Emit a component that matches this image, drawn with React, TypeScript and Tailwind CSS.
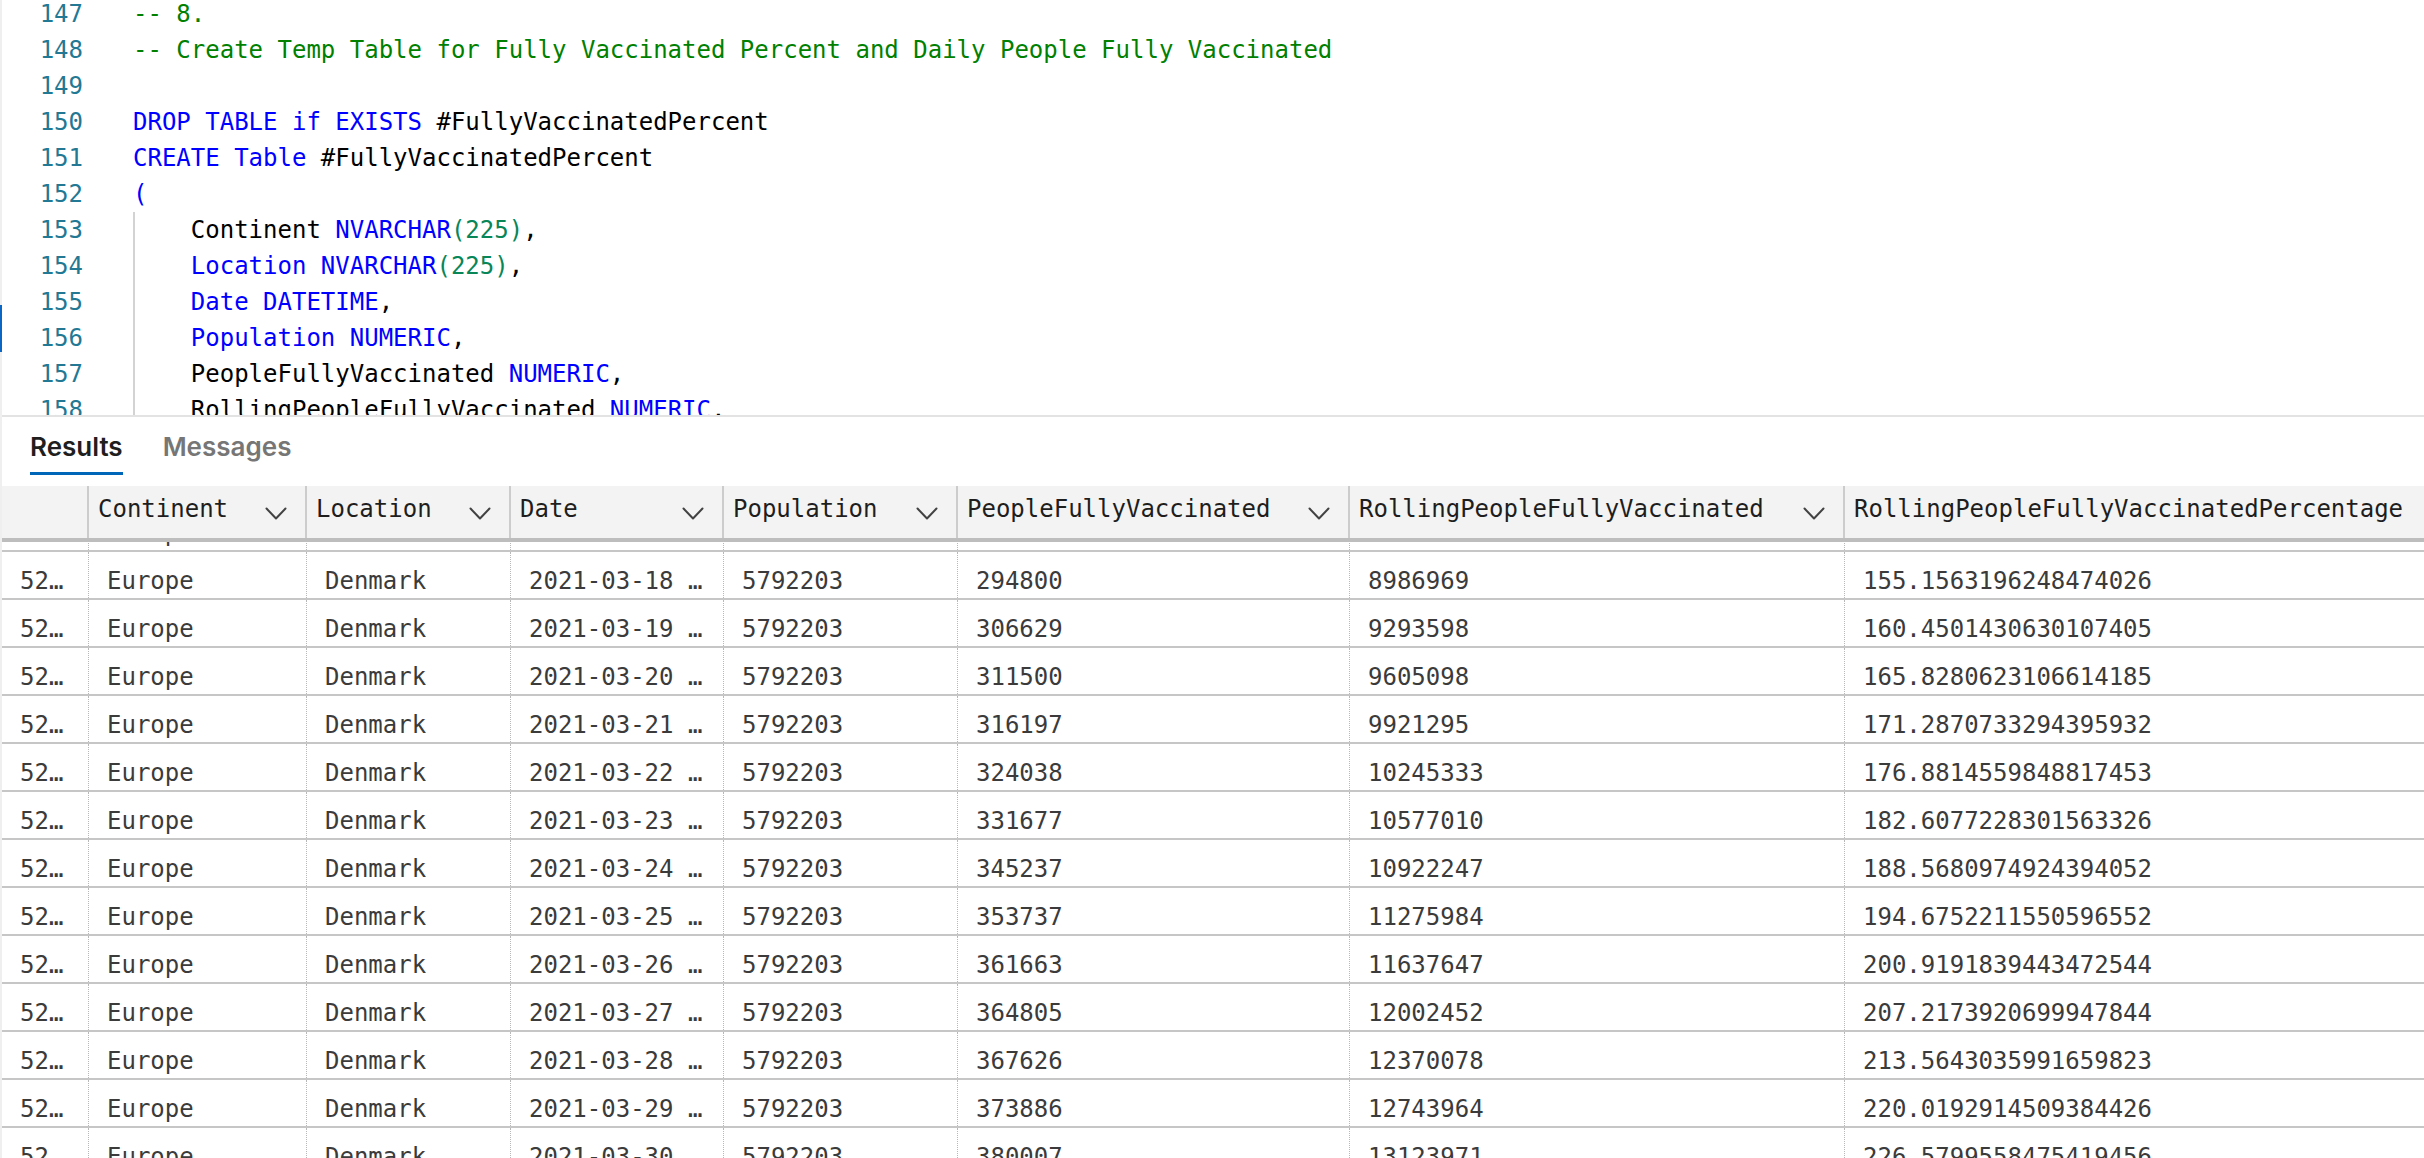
import React from "react";

type Tok = { t: string; c: "g" | "b" | "n" | "k" };

const tokCls: Record<string, string> = {
  g: "text-[#008000]",
  b: "text-[#0000ff]",
  n: "text-[#098658]",
  k: "text-[#000000]",
};

const codeLines: { n: number; indent: boolean; toks: Tok[] }[] = [
  { n: 147, indent: false, toks: [{ t: "-- 8.", c: "g" }] },
  {
    n: 148,
    indent: false,
    toks: [
      {
        t: "-- Create Temp Table for Fully Vaccinated Percent and Daily People Fully Vaccinated",
        c: "g",
      },
    ],
  },
  { n: 149, indent: false, toks: [] },
  {
    n: 150,
    indent: false,
    toks: [
      { t: "DROP TABLE if EXISTS", c: "b" },
      { t: " #FullyVaccinatedPercent", c: "k" },
    ],
  },
  {
    n: 151,
    indent: false,
    toks: [
      { t: "CREATE Table", c: "b" },
      { t: " #FullyVaccinatedPercent", c: "k" },
    ],
  },
  { n: 152, indent: false, toks: [{ t: "(", c: "b" }] },
  {
    n: 153,
    indent: true,
    toks: [
      { t: "Continent ", c: "k" },
      { t: "NVARCHAR", c: "b" },
      { t: "(225)", c: "n" },
      { t: ",", c: "k" },
    ],
  },
  {
    n: 154,
    indent: true,
    toks: [
      { t: "Location NVARCHAR", c: "b" },
      { t: "(225)", c: "n" },
      { t: ",", c: "k" },
    ],
  },
  {
    n: 155,
    indent: true,
    toks: [
      { t: "Date DATETIME", c: "b" },
      { t: ",", c: "k" },
    ],
  },
  {
    n: 156,
    indent: true,
    toks: [
      { t: "Population NUMERIC", c: "b" },
      { t: ",", c: "k" },
    ],
  },
  {
    n: 157,
    indent: true,
    toks: [
      { t: "PeopleFullyVaccinated ", c: "k" },
      { t: "NUMERIC", c: "b" },
      { t: ",", c: "k" },
    ],
  },
  {
    n: 158,
    indent: true,
    toks: [
      { t: "RollingPeopleFullyVaccinated ", c: "k" },
      { t: "NUMERIC", c: "b" },
      { t: ",", c: "k" },
    ],
  },
];

const headers: { name: string; w: string; chevron: boolean }[] = [
  { name: "", w: "w-[87px]", chevron: false },
  { name: "Continent", w: "w-[218px]", chevron: true },
  { name: "Location", w: "w-[204px]", chevron: true },
  { name: "Date", w: "w-[213px]", chevron: true },
  { name: "Population", w: "w-[234px]", chevron: true },
  { name: "PeopleFullyVaccinated", w: "w-[392px]", chevron: true },
  { name: "RollingPeopleFullyVaccinated", w: "w-[495px]", chevron: true },
  { name: "RollingPeopleFullyVaccinatedPercentage", w: "w-[720px]", chevron: true },
];

const rows: string[][] = [
  ["52…", "Europe", "Denmark", "2021-03-17 …", "5792203", "287000", "8692169", "150.0667155121030981"],
  ["52…", "Europe", "Denmark", "2021-03-18 …", "5792203", "294800", "8986969", "155.1563196248474026"],
  ["52…", "Europe", "Denmark", "2021-03-19 …", "5792203", "306629", "9293598", "160.4501430630107405"],
  ["52…", "Europe", "Denmark", "2021-03-20 …", "5792203", "311500", "9605098", "165.8280623106614185"],
  ["52…", "Europe", "Denmark", "2021-03-21 …", "5792203", "316197", "9921295", "171.2870733294395932"],
  ["52…", "Europe", "Denmark", "2021-03-22 …", "5792203", "324038", "10245333", "176.8814559848817453"],
  ["52…", "Europe", "Denmark", "2021-03-23 …", "5792203", "331677", "10577010", "182.6077228301563326"],
  ["52…", "Europe", "Denmark", "2021-03-24 …", "5792203", "345237", "10922247", "188.5680974924394052"],
  ["52…", "Europe", "Denmark", "2021-03-25 …", "5792203", "353737", "11275984", "194.6752211550596552"],
  ["52…", "Europe", "Denmark", "2021-03-26 …", "5792203", "361663", "11637647", "200.9191839443472544"],
  ["52…", "Europe", "Denmark", "2021-03-27 …", "5792203", "364805", "12002452", "207.2173920699947844"],
  ["52…", "Europe", "Denmark", "2021-03-28 …", "5792203", "367626", "12370078", "213.5643035991659823"],
  ["52…", "Europe", "Denmark", "2021-03-29 …", "5792203", "373886", "12743964", "220.0192914509384426"],
  ["52…", "Europe", "Denmark", "2021-03-30 …", "5792203", "380007", "13123971", "226.5799558475419456"],
];

function Chevron() {
  return (
    <svg width="22" height="13" viewBox="0 0 22 13" className="flex-none mt-[8px]">
      <polyline
        points="1.5,1.5 11,11.5 20.5,1.5"
        fill="none"
        stroke="#424242"
        strokeWidth="2"
        strokeLinecap="round"
        strokeLinejoin="round"
      />
    </svg>
  );
}

export default function App() {
  return (
    <div className="w-[2424px] h-[1158px] overflow-hidden bg-white flex flex-row font-['DejaVu_Sans_Mono',monospace]">
      {/* left window edge with change indicator */}
      <div className="w-[2px] flex-none bg-[#efefef] flex flex-col">
        <div className="mt-[305px] h-[47px] bg-[#0a66c2]" />
      </div>

      <div className="flex-1 min-w-0 flex flex-col overflow-hidden">
        {/* Editor */}
        <div className="h-[417px] flex-none overflow-hidden border-b-2 border-[#e3e3e3]">
          <div className="-mt-[4px] flex flex-col">
            {codeLines.map((l) => (
              <div key={l.n} className="h-[36px] flex flex-row items-center text-[24px] leading-[36px] whitespace-pre">
                <div className="w-[81px] flex-none text-right text-[#237893]">{l.n}</div>
                <div className="ml-[50px] flex flex-row h-full">
                  {l.indent && (
                    <div className="w-[57.8px] flex-none h-full border-l-2 border-[#d3d3d3]" />
                  )}
                  <div>
                    {l.toks.map((t, i) => (
                      <span key={i} className={tokCls[t.c]}>
                        {t.t}
                      </span>
                    ))}
                  </div>
                </div>
              </div>
            ))}
          </div>
        </div>

        {/* Tabs */}
        <div className="h-[69px] flex-none flex flex-row items-start pl-[28px] gap-[40px] font-['Inter',sans-serif] text-[26px] font-semibold">
          <div className="flex flex-col pt-[14px]">
            <div className="leading-[32px] text-[#1f1f1f]">Results</div>
            <div className="mt-[9px] h-[3px] bg-[#0066b8]" />
          </div>
          <div className="flex flex-col pt-[14px]">
            <div className="leading-[32px] text-[#767676]">Messages</div>
          </div>
        </div>

        {/* Grid header */}
        <div className="h-[56px] flex-none flex flex-row bg-[#f3f3f3] border-b-4 border-[#bdbdbd] overflow-hidden">
          {headers.map((h, i) => (
            <div
              key={i}
              className={`${h.w} flex-none h-full flex flex-row items-center justify-between pl-[9px] pr-[18px] pb-[6px] border-r-2 border-[#cccccc] text-[24px] text-[#1e1e1e] whitespace-nowrap`}
            >
              <span>{h.name}</span>
              {h.chevron && <Chevron />}
            </div>
          ))}
        </div>

        {/* Grid body */}
        <div className="flex-1 min-h-0 overflow-hidden">
          <div className="-mt-[38px] flex flex-col">
            {rows.map((r, ri) => (
              <div key={ri} className="h-[48px] flex-none flex flex-row border-b-2 border-[#c6c6c6]">
                {r.map((cell, ci) => (
                  <div
                    key={ci}
                    className={`${headers[ci].w} flex-none h-full flex flex-row items-center pt-[12px] ${ci === 0 ? "pl-[18px]" : "pl-[18px]"} border-r border-dotted border-[#b8b8b8] text-[24px] text-[#3b3b3b] whitespace-nowrap overflow-hidden`}
                  >
                    {cell}
                  </div>
                ))}
              </div>
            ))}
          </div>
        </div>
      </div>
    </div>
  );
}
